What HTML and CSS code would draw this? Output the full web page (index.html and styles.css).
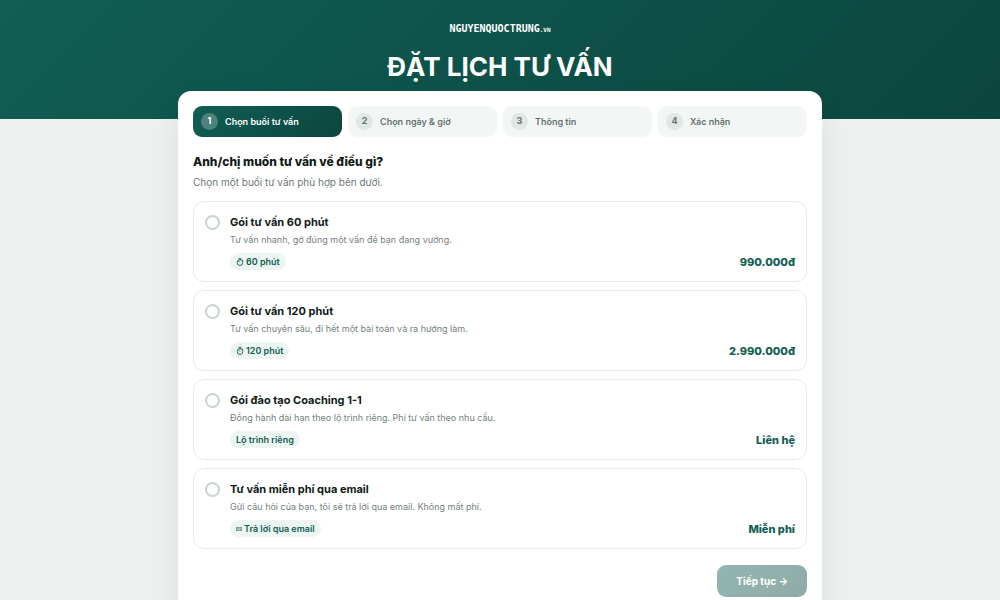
FILE: index.html
```html
<!DOCTYPE html>
<html lang="vi">

<head>
  <meta charset="UTF-8">
  <meta name="viewport" content="width=device-width, initial-scale=1.0">
  <title>Đặt lịch tư vấn</title>
  <link rel="stylesheet" href="styles.css">
</head>

<body>
  <header class="hero">
    <a href="#" class="logo">NGUYENQUOCTRUNG<small>.VN</small></a>
    <h1>ĐẶT LỊCH TƯ VẤN</h1>
  </header>

  <main class="booking">
    <ol class="steps">
      <li class="step active"><span class="num">1</span>Chọn buổi tư vấn</li>
      <li class="step"><span class="num">2</span>Chọn ngày &amp; giờ</li>
      <li class="step"><span class="num">3</span>Thông tin</li>
      <li class="step"><span class="num">4</span>Xác nhận</li>
    </ol>

    <form>
      <h2>Anh/chị muốn tư vấn về điều gì?</h2>
      <p class="hint">Chọn một buổi tư vấn phù hợp bên dưới.</p>

      <div class="options">
        <label class="option">
          <input type="radio" name="goi" value="60">
          <span class="info">
            <span class="name">Gói tư vấn 60 phút</span>
            <span class="desc">Tư vấn nhanh, gỡ đúng một vấn đề bạn đang vướng.</span>
            <span class="meta">
              <span class="tag"><svg class="clock" viewBox="0 0 14 14" aria-hidden="true"><circle cx="7" cy="8" r="5"/><path d="M4.5 1.2h5M7 1.2V3M11 3.2l1.8 1.6M7 8L4.6 5.6"/></svg>60 phút</span>
              <span class="price">990.000đ</span>
            </span>
          </span>
        </label>

        <label class="option">
          <input type="radio" name="goi" value="120">
          <span class="info">
            <span class="name">Gói tư vấn 120 phút</span>
            <span class="desc">Tư vấn chuyên sâu, đi hết một bài toán và ra hướng làm.</span>
            <span class="meta">
              <span class="tag"><svg class="clock" viewBox="0 0 14 14" aria-hidden="true"><circle cx="7" cy="8" r="5"/><path d="M4.5 1.2h5M7 1.2V3M11 3.2l1.8 1.6M7 8L4.6 5.6"/></svg>120 phút</span>
              <span class="price">2.990.000đ</span>
            </span>
          </span>
        </label>

        <label class="option">
          <input type="radio" name="goi" value="coaching">
          <span class="info">
            <span class="name">Gói đào tạo Coaching 1-1</span>
            <span class="desc">Đồng hành dài hạn theo lộ trình riêng. Phí tư vấn theo nhu cầu.</span>
            <span class="meta">
              <span class="tag">Lộ trình riêng</span>
              <span class="price">Liên hệ</span>
            </span>
          </span>
        </label>

        <label class="option">
          <input type="radio" name="goi" value="email">
          <span class="info">
            <span class="name">Tư vấn miễn phí qua email</span>
            <span class="desc">Gửi câu hỏi của bạn, tôi sẽ trả lời qua email. Không mất phí.</span>
            <span class="meta">
              <span class="tag"><svg class="mail" viewBox="0 0 12 8" aria-hidden="true"><path d="M1 1h10v6H1zM1 1l5 3.5L11 1M1 7l3.7-3.4M11 7L7.3 3.6"/></svg>Trả lời qua email</span>
              <span class="price">Miễn phí</span>
            </span>
          </span>
        </label>
      </div>

      <div class="actions">
        <button type="submit" disabled>Tiếp tục →</button>
      </div>
    </form>
  </main>
</body>

</html>
```

FILE: styles.css
```css
* {
  box-sizing: border-box;
}

body {
  margin: 0;
  font-family: Inter, "Noto Sans", sans-serif;
  background: #edf1f0;
  color: #0f1a17;
}

.hero {
  display: flex;
  flex-direction: column;
  align-items: center;
  height: 119px;
  padding-top: 22px;
  background: linear-gradient(135deg, #115e54, #0b463e);
  color: #fff;
}

.logo {
  color: #fff;
  font-family: "DejaVu Sans Mono", monospace;
  font-size: 10px;
  font-weight: bold;
  line-height: 14px;
  text-decoration: none;
}

.logo small {
  font-size: 6px;
}

h1 {
  margin: 14px 0 0;
  font-size: 26px;
  font-weight: 700;
  line-height: 32px;
}

.booking {
  position: relative;
  width: calc(100% - 32px);
  max-width: 644px;
  margin: -28px auto 0;
  padding: 15px 15px 24px;
  background: #fff;
  border-radius: 13px;
  box-shadow: 0 12px 32px rgba(11, 70, 62, 0.08);
}

.steps {
  display: grid;
  grid-template-columns: repeat(4, 1fr);
  gap: 6px;
  margin: 0 0 16px;
  padding: 0;
  list-style: none;
}

.step {
  display: flex;
  align-items: center;
  gap: 7px;
  height: 31px;
  padding: 0 8px;
  border-radius: 9px;
  background: #f2f6f5;
  color: #65736f;
  font-size: 9px;
  font-weight: 600;
}

.num {
  width: 17px;
  height: 17px;
  border-radius: 50%;
  background: #e0e7e5;
  font-weight: 700;
  line-height: 16px;
  text-align: center;
}

.step.active {
  background: linear-gradient(135deg, #115e54, #0b463e);
  color: #fff;
}

.step.active .num {
  background: rgba(255, 255, 255, 0.25);
}

h2 {
  margin: 0;
  font-size: 12px;
  font-weight: 800;
  line-height: 18px;
}

.hint {
  margin: 4px 0 12px;
  color: #6b7875;
  font-size: 10px;
  line-height: 14px;
}

.options {
  display: flex;
  flex-direction: column;
  gap: 8px;
}

.option {
  display: flex;
  gap: 10px;
  padding: 12px 11px 11px;
  border: 1px solid #e5ebe9;
  border-radius: 11px;
  cursor: pointer;
}

.option input {
  appearance: none;
  flex: none;
  width: 15px;
  height: 15px;
  margin: 1px 0 0;
  border: 2px solid #c9d3d0;
  border-radius: 50%;
}

.option input:checked {
  border: 5px solid #115e54;
}

.info {
  display: flex;
  flex: 1;
  flex-direction: column;
}

.name {
  font-size: 11px;
  font-weight: 700;
  line-height: 16px;
}

.desc {
  margin-top: 3px;
  color: #74817d;
  font-size: 9px;
  line-height: 14px;
}

.meta {
  display: flex;
  align-items: center;
  justify-content: space-between;
  margin-top: 6px;
}

.tag {
  display: flex;
  align-items: center;
  gap: 2px;
  padding: 0 6px;
  border-radius: 9px;
  background: #edf5f3;
  color: #115e54;
  font-size: 9px;
  font-weight: 600;
  line-height: 17px;
}

.tag svg {
  fill: none;
  stroke: currentColor;
}

.clock {
  width: 8px;
  height: 8px;
  stroke-width: 1.6;
}

.mail {
  width: 6px;
  height: 4px;
  stroke-width: 1;
}

.price {
  color: #115e54;
  font-size: 11px;
  font-weight: 800;
  line-height: 16px;
}

.actions {
  display: flex;
  justify-content: flex-end;
  margin-top: 16px;
}

button {
  padding: 0 19px;
  border: none;
  border-radius: 9px;
  background: linear-gradient(135deg, #115e54, #0b463e);
  color: #fff;
  font-family: inherit;
  font-size: 10px;
  font-weight: 700;
  line-height: 32px;
  cursor: pointer;
}

button:disabled {
  opacity: 0.45;
  cursor: not-allowed;
}
```
